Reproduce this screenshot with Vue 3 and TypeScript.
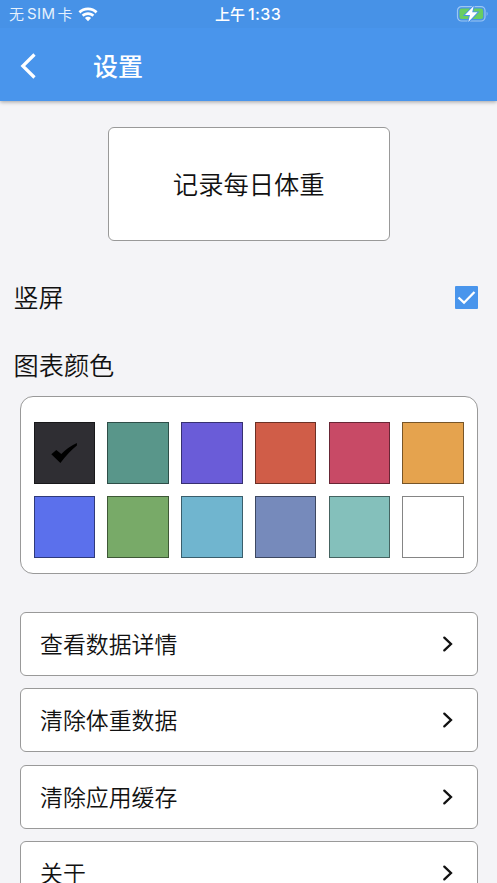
<script setup lang="ts">
import { ref } from 'vue'

const portrait = ref(true)
const selected = ref(0)
const colors: string[] = [
  '#2f2e33', '#59968a', '#6a5cd8', '#d05d48', '#c84a66', '#e5a34e',
  '#5b70ec', '#78aa68', '#70b5cf', '#768abb', '#84c0bb', '#ffffff',
]
const items: string[] = ['查看数据详情', '清除体重数据', '清除应用缓存', '关于']
</script>

<template>
  <div class="screen">
    <header class="header">
      <div class="status">
        <div class="carrier">
          <span>无</span><span class="sim">SIM</span><span>卡</span>
          <svg class="wifi" width="20" height="15" viewBox="0 0 20 15" fill="#fff">
            <path d="M10 0.4c3.8 0 7.100 1.500 9.500 3.900l-1.900 2.100C15.600 4.500 13 3.300 10 3.300S4.400 4.500 2.400 6.400L.5 4.300C2.900 1.900 6.200.4 10 .4z" />
            <path d="M10 5.200c2.500 0 4.700 1 6.300 2.500l-2 2.100C13.200 8.700 11.700 8 10 8S6.800 8.700 5.700 9.800l-2-2.100C5.300 6.200 7.500 5.200 10 5.200z" />
            <path d="M10 9.700c1.200 0 2.300.5 3.100 1.300L10 14.300 6.900 11c.8-.8 1.900-1.300 3.100-1.300z" />
          </svg>
        </div>
        <div class="time"><span>上午</span><span class="clock">1:33</span></div>
        <svg class="battery" width="33" height="18" viewBox="0 0 33 18">
          <rect x="1.500" y="1.600" width="27.500" height="14.400" rx="4" fill="none" stroke="#9cc6f4" stroke-width="1.200" />
          <rect x="3.400" y="3.500" width="23.800" height="10.600" rx="2.400" fill="#69cd62" />
          <path d="M30.700 6.700c1.200.6 1.200 3.600 0 4.200z" fill="#9cc6f4" />
          <path class="bolt" d="M17.700 1.100L9 10h5l-1.700 7 9.200-9.700h-5.300z" fill="#fff" stroke="#4893e9" stroke-width="1.800" />
        </svg>
      </div>
      <div class="nav">
        <svg class="back" width="18" height="28" viewBox="0 0 18 28">
          <path d="M15.500 2.500L3.800 14 15.500 25.500" fill="none" stroke="#fff" stroke-width="3.200" />
        </svg>
        <h1>设置</h1>
      </div>
    </header>

    <main>
      <button class="record">记录每日体重</button>

      <div class="orientation">
        <span>竖屏</span>
        <button class="checkbox" @click="portrait = !portrait">
          <svg v-if="portrait" width="23" height="23" viewBox="0 0 23 23">
            <path d="M3.500 11.500L9 16.700 19.500 6" fill="none" stroke="#fff" stroke-width="2.300" />
          </svg>
        </button>
      </div>

      <h2>图表颜色</h2>
      <div class="palette">
        <button
          v-for="(color, index) in colors"
          :key="color"
          class="swatch"
          :style="{ backgroundColor: color }"
          @click="selected = index"
        >
          <svg v-if="selected === index" width="28" height="22" viewBox="0 0 28 22">
            <path d="M1.300 12.300L6.300 7.900 11.300 12.100Q18 5 26.900 1V3.400Q18 10.500 10.400 21z" />
          </svg>
        </button>
      </div>

      <nav class="list">
        <button v-for="item in items" :key="item" class="item">
          <span>{{ item }}</span>
          <svg width="12" height="18" viewBox="0 0 12 18">
            <path d="M2.300 2.600L9 9 2.300 15.400" fill="none" stroke="#111" stroke-width="2.300" stroke-linecap="round" />
          </svg>
        </button>
      </nav>
    </main>
  </div>
</template>

<style>
body {
  margin: 0;
  background: #f4f4f7;
}
</style>

<style scoped>
.screen {
  box-sizing: border-box;
  height: 883px;
  overflow: hidden;
  background: #f4f4f7;
  color: #111;
  font-family: "Noto Sans CJK SC", sans-serif;
  font-weight: 350;
}
button {
  box-sizing: border-box;
  margin: 0;
  padding: 0;
  font: inherit;
  color: inherit;
}
svg {
  display: block;
  flex: none;
}
.header {
  height: 101px;
  background: #4995ec;
  color: #fff;
  box-shadow: 0 1px 4px rgba(0, 0, 0, 0.35);
}
.status {
  display: grid;
  grid-template-columns: 1fr auto 1fr;
  height: 28px;
  padding: 0 8px 0 9px;
  align-items: center;
  background: #4792e7;
  font-size: 15px;
  line-height: 28px;
}
.carrier {
  display: flex;
  align-items: center;
  color: #e8f2fd;
}
.sim {
  margin: 0 2px 0 3px;
  font-family: Inter, sans-serif;
  font-weight: 400;
  letter-spacing: 0.400px;
}
.wifi {
  margin-left: 6px;
}
.time {
  display: flex;
  margin-left: -2px;
  font-weight: 500;
}
.clock {
  margin-left: 3px;
  font-family: Inter, sans-serif;
  font-size: 16px;
  letter-spacing: 0.400px;
}
.battery {
  justify-self: end;
  margin-top: -1px;
}
.bolt {
  paint-order: stroke;
}
.nav {
  display: flex;
  align-items: center;
  height: 76px;
  padding-left: 19px;
}
h1 {
  margin: -2px 0 0 56px;
  font-size: 25px;
  font-weight: 500;
  line-height: 36px;
}
main {
  padding: 26px 19.500px 0 20px;
}
.record {
  display: block;
  width: 282px;
  height: 114px;
  margin: 0 auto;
  padding-bottom: 3px;
  border: 1px solid #999;
  border-radius: 6px;
  background: #fff;
  font-size: 25.300px;
}
.orientation {
  display: flex;
  align-items: center;
  justify-content: space-between;
  height: 36px;
  margin: 38px 0 0 -6.500px;
  font-size: 25px;
}
.orientation span {
  margin-top: -2px;
}
.checkbox {
  width: 23px;
  height: 23px;
  border: 0;
  border-radius: 1px;
  background: #4995ec;
}
h2 {
  margin: 31px 0 0 -6.500px;
  font-size: 25.200px;
  font-weight: 350;
  line-height: 37px;
}
.palette {
  box-sizing: border-box;
  display: grid;
  grid-template-columns: repeat(6, 61.500px);
  grid-auto-rows: 61.500px;
  justify-content: space-between;
  row-gap: 12.500px;
  height: 178px;
  margin-top: 13px;
  padding: 25px 12.500px 0;
  border: 1px solid #999;
  border-radius: 13px;
  background: #fff;
}
.swatch {
  display: grid;
  place-items: center;
  border: 1px solid rgba(0, 0, 0, 0.48);
}
.list {
  display: grid;
  gap: 12.400px;
  margin-top: 38px;
}
.item {
  display: flex;
  align-items: center;
  justify-content: space-between;
  height: 64px;
  padding: 0 23px 0 19px;
  border: 1px solid #999;
  border-radius: 6px;
  background: #fff;
  font-size: 22.900px;
}
.item span {
  margin-top: -2px;
}
</style>
